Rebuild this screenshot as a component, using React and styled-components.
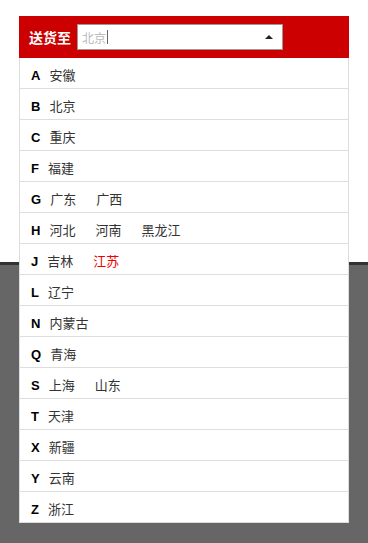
import React from "react";
import styled, { createGlobalStyle } from "styled-components";

const GlobalStyle = createGlobalStyle`
  html, body {
    margin: 0;
    padding: 0;
  }
  body {
    min-height: 543px;
    font-family: "Liberation Sans", "Noto Sans CJK SC", sans-serif;
    background: linear-gradient(
      #fff 0,
      #fff 262px,
      #333 262px,
      #333 265px,
      #666 265px
    );
  }
`;

const Page = styled.div`
  padding: 16px 0 0 19px;
`;

const Panel = styled.div`
  width: 330px;
  background: #fff;
`;

const Header = styled.div`
  height: 42px;
  background: #cc0000;
  display: flex;
  align-items: center;
  padding-left: 10px;
  gap: 6px;
`;

const Label = styled.span`
  color: #fff;
  font-weight: bold;
  font-size: 14px;
  font-family: "Noto Sans CJK SC", sans-serif;
`;

const InputBox = styled.div`
  width: 206px;
  height: 26px;
  border: 1px solid #999;
  background: #fff;
  display: flex;
  align-items: center;
  justify-content: space-between;
  padding: 0 9px 0 4px;
  box-sizing: border-box;
`;

const Placeholder = styled.span`
  color: #bbb;
  font-size: 12px;
  font-family: "Noto Sans CJK SC", sans-serif;
  display: flex;
  align-items: center;
`;

const Caret = styled.span`
  display: inline-block;
  width: 1px;
  height: 14px;
  background: #666;
  margin-left: 1px;
`;

const Arrow = styled.span`
  width: 0;
  height: 0;
  border-left: 4px solid transparent;
  border-right: 4px solid transparent;
  border-bottom: 4px solid #222;
`;

const List = styled.div`
  border-left: 1px solid #ddd;
  border-right: 1px solid #ddd;
`;

const Row = styled.div`
  height: 27px;
  line-height: 27px;
  padding: 3px 0 0 11px;
  border-bottom: 1px solid #ddd;
  display: flex;
  align-items: baseline;
`;

const Letter = styled.span`
  font-weight: bold;
  font-size: 13px;
  color: #000;
  margin-right: 9px;
  font-family: "Liberation Sans", sans-serif;
`;

const City = styled.span`
  font-size: 13px;
  color: ${(p) => (p.$active ? "#e00" : "#333")};
  margin-right: 20px;
  font-family: "Noto Sans CJK SC", sans-serif;
`;

const groups = [
  ["A", ["安徽"]],
  ["B", ["北京"]],
  ["C", ["重庆"]],
  ["F", ["福建"]],
  ["G", ["广东", "广西"]],
  ["H", ["河北", "河南", "黑龙江"]],
  ["J", ["吉林", "江苏"]],
  ["L", ["辽宁"]],
  ["N", ["内蒙古"]],
  ["Q", ["青海"]],
  ["S", ["上海", "山东"]],
  ["T", ["天津"]],
  ["X", ["新疆"]],
  ["Y", ["云南"]],
  ["Z", ["浙江"]],
];

const App = () => {
  return (
    <>
      <GlobalStyle />
      <Page>
        <Panel>
          <Header>
            <Label>送货至</Label>
            <InputBox>
              <Placeholder>
                北京
                <Caret />
              </Placeholder>
              <Arrow />
            </InputBox>
          </Header>
          <List>
            {groups.map(([letter, cities]) => (
              <Row key={letter}>
                <Letter>{letter}</Letter>
                {cities.map((c) => (
                  <City key={c} $active={c === "江苏"}>
                    {c}
                  </City>
                ))}
              </Row>
            ))}
          </List>
        </Panel>
      </Page>
    </>
  );
};

export default App;
